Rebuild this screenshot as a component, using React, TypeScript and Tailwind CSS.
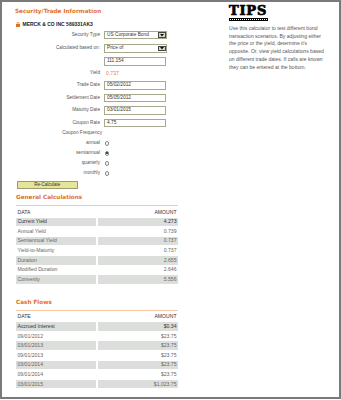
import { ReactNode } from "react";

const calcRows: [string, string][] = [
    ["Current Yield", "4.273"],
    ["Annual Yield", "0.739"],
    ["Semiannual Yield", "0.737"],
    ["Yield-to-Maturity", "0.737"],
    ["Duration", "2.655"],
    ["Modified Duration", "2.646"],
    ["Convexity", "5.556"],
];

const cashRows: [string, string][] = [
    ["Accrued Interest", "$0.34"],
    ["09/01/2012", "$23.75"],
    ["03/01/2013", "$23.75"],
    ["09/01/2013", "$23.75"],
    ["03/01/2014", "$23.75"],
    ["09/01/2014", "$23.75"],
    ["03/01/2015", "$1,023.75"],
];

const frequencies = ["annual", "semiannual", "quarterly", "monthly"];

function FormRow({ label, className, children }: { label: string; className: string; children?: ReactNode }) {
    return (
        <div className={`flex items-center gap-[4px] ${className}`}>
            <span className="w-[85px] shrink-0 text-right text-[4.7px] leading-none text-[#555]">{label}</span>
            {children}
        </div>
    );
}

function TextBox({ value }: { value: string }) {
    return (
        <div className="flex h-[8.6px] w-[61.5px] items-center border-[1.5px] border-[#a8a88e] bg-white pl-[2px] text-[4.8px] leading-none text-[#333]">
            {value}
        </div>
    );
}

function SelectBox({ value }: { value: string }) {
    return (
        <div className="flex h-[8.8px] w-[63px] items-center justify-between border-[1.5px] border-[#a8a88e] bg-white pl-[2px] pr-[0.5px] text-[4.8px] leading-none text-[#333]">
            <span>{value}</span>
            <span className="flex h-[5.5px] w-[7.5px] items-center justify-center border border-[#444] bg-[#d8d6d0]">
                <svg width="4" height="3" viewBox="0 0 4 3">
                    <path d="M0 0h4L2 2.6z" fill="#111" />
                </svg>
            </span>
        </div>
    );
}

function Radio({ checked }: { checked?: boolean }) {
    return (
        <span className="flex h-[4.6px] w-[4.6px] items-center justify-center rounded-full border border-[#888] bg-white">
            {checked && <span className="h-[2px] w-[2px] rounded-full bg-[#111]" />}
        </span>
    );
}

function ResultTable({ title, head, rows, className }: { title: string; head: string; rows: [string, string][]; className: string }) {
    return (
        <div className={`ml-[1px] w-[162px] ${className}`}>
            <div className="flex h-[9px] items-center font-['DejaVu_Sans',sans-serif] text-[5.7px] font-bold text-[#e2711d]">
                {title}
            </div>
            <div className="mt-[3.3px] h-px bg-[#f6c9a6]" />
            <div className="mt-[1.6px] flex flex-col gap-y-[1px] text-[5.1px] leading-none">
                <div className="flex h-[8.6px] items-center justify-between px-[1.5px] text-[#333]">
                    <span>{head}</span>
                    <span>AMOUNT</span>
                </div>
                {rows.map(([name, amount], i) => (
                    <div key={name} className="grid h-[8.6px] grid-cols-2 gap-x-[1.4px]">
                        <div className={`flex items-center pl-[1.5px] ${i % 2 === 0 ? "bg-[#dcdedb]" : ""} ${i === 0 ? "text-[#333]" : "text-[#666]"}`}>
                            {name}
                        </div>
                        <div className={`flex items-center justify-end pr-[1.5px] ${i % 2 === 0 ? "bg-[#dcdedb]" : ""} ${i === 0 ? "text-[#333]" : "text-[#666]"}`}>
                            {amount}
                        </div>
                    </div>
                ))}
            </div>
        </div>
    );
}

export default function App() {
    return (
        <div className="flex h-[399px] w-[341px] border-2 border-[#7a7a7a] bg-white font-['Liberation_Sans',Arial,sans-serif]">
            {/* Calculator column */}
            <div className="w-[227px] shrink-0 pl-[13px] pt-[4.5px]">
                <div className="flex h-[9px] items-center font-['DejaVu_Sans',sans-serif] text-[5.7px] font-bold text-[#e2711d]">
                    Security/Trade Information
                </div>
                <div className="mt-[4.5px] flex h-[8px] items-center gap-[2.5px] pl-[1px]">
                    <svg width="4" height="5" viewBox="0 0 4 5">
                        <path d="M1 2V1.3a1 1 0 0 1 2 0V2" fill="none" stroke="#e2711d" strokeWidth="0.7" />
                        <rect x="0" y="2" width="4" height="3" fill="#e2711d" />
                    </svg>
                    <span className="text-[5px] font-bold leading-none text-[#222]">MERCK &amp; CO INC 589331AK3</span>
                </div>

                {/* Bond inputs */}
                <div className="mt-[0.4px] flex flex-col">
                    <FormRow label="Security Type" className="h-[13.4px]">
                        <SelectBox value="US Corporate Bond" />
                    </FormRow>
                    <FormRow label="Calculated based on:" className="h-[13.4px]">
                        <SelectBox value="Price of" />
                    </FormRow>
                    <FormRow label="" className="h-[12.5px]">
                        <TextBox value="111.154" />
                    </FormRow>
                    <FormRow label="Yield" className="h-[11.5px]">
                        <span className="pl-[2px] text-[5.2px] leading-none text-[#ee7f2d]">0.737</span>
                    </FormRow>
                    <FormRow label="Trade Date" className="h-[12.5px]">
                        <TextBox value="05/02/2012" />
                    </FormRow>
                    <FormRow label="Settlement Date" className="h-[12.8px]">
                        <TextBox value="05/05/2012" />
                    </FormRow>
                    <FormRow label="Maturity Date" className="h-[12.5px]">
                        <TextBox value="03/01/2015" />
                    </FormRow>
                    <FormRow label="Coupon Rate" className="h-[12.3px]">
                        <TextBox value="4.75" />
                    </FormRow>
                    <div className="flex h-[9px] items-center">
                        <span className="w-[87px] shrink-0 text-right text-[4.7px] leading-none text-[#555]">Coupon Frequency</span>
                    </div>
                    {frequencies.map((f) => (
                        <div key={f} className="flex h-[10px] items-center gap-[4.5px]">
                            <span className="w-[85px] shrink-0 text-right text-[4.7px] leading-none text-[#555]">{f}</span>
                            <Radio checked={f === "semiannual"} />
                        </div>
                    ))}
                </div>

                <button className="ml-[1.7px] mt-[2.5px] flex h-[8.3px] w-[61px] items-center justify-center border border-[#9c9c74] bg-[#e5e595] text-[4.5px] leading-none text-[#333]">
                    Re-Calculate
                </button>

                <ResultTable title="General Calculations" head="DATA" rows={calcRows} className="mt-[4px]" />
                <ResultTable title="Cash Flows" head="DATE" rows={cashRows} className="mt-[14px]" />
            </div>

            {/* Tips column */}
            <div className="pt-[2px]">
                <div className="font-['DejaVu_Serif',serif] text-[13px] font-black leading-none tracking-[0.8px] text-black [-webkit-text-stroke:0.7px_black]">
                    TIPS
                </div>
                <div className="mt-[0.5px] flex h-[3px] w-[39px] items-center bg-black px-[1px]">
                    <div className="w-full border-t border-dotted border-white" />
                </div>
                <p className="mt-[4.5px] w-[96px] text-[5.05px] leading-[7.7px] text-[#555]">
                    Use this calculator to test different bond transaction scenarios. By adjusting either the price or the yield, determine it's opposite. Or, view yield calculations based on different trade dates. If calls are known they can be entered at the bottom.
                </p>
            </div>
        </div>
    );
}
